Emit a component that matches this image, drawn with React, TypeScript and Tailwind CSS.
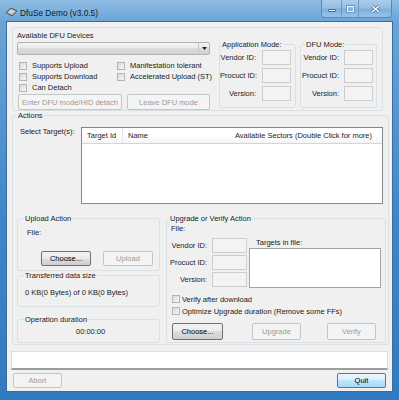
import React from 'react';

type BtnProps = {
  label: string;
  disabled?: boolean;
  primary?: boolean;
  className?: string;
};

const Btn = ({ label, disabled, primary, className = '' }: BtnProps) => {
  const look = disabled
    ? 'border-[#c3c6c9] bg-[#f4f4f4] text-[#9b9b9b]'
    : primary
      ? 'border-[#3c7fb1] bg-[linear-gradient(#eaf6fd,#d9f0fc_50%,#bee6fd_50%,#a7d9f5)] text-black'
      : 'border-[#707070] bg-[linear-gradient(#f2f2f2,#ebebeb_50%,#dddddd_50%,#cfcfcf)] text-black';
  return (
    <div
      className={`flex shrink-0 items-center justify-center rounded-[2px] border ${look} ${className}`}
    >
      {label}
    </div>
  );
};

const Check = ({ label, gap = 'ml-[5px]', className = '' }: { label: string; gap?: string; className?: string }) => (
  <div className={`flex items-center whitespace-nowrap ${className}`}>
    <span className="h-[8px] w-[8px] shrink-0 border border-[#b4b4b4] bg-[linear-gradient(135deg,#d9d9d9,#f7f7f7)]" />
    <span className={gap}>{label}</span>
  </div>
);

type GroupProps = {
  legend: string;
  className?: string;
  legendClass?: string;
  children?: React.ReactNode;
};

const Group = ({ legend, className = '', legendClass = '', children }: GroupProps) => (
  <fieldset className={`shrink-0 rounded-[3px] border border-[#d9e1e6] ${className}`}>
    <legend className={`h-[9px] px-[1px] ${legendClass}`}>{legend}</legend>
    {children}
  </fieldset>
);

const IdRow = ({ label, labelW, gap, boxW, h = 'h-[15px]' }: { label: string; labelW: string; gap: string; boxW: string; h?: string }) => (
  <div className={`flex items-center ${h}`}>
    <span className={`${labelW} shrink-0 whitespace-nowrap text-right`}>{label}</span>
    <span className={`${gap} ${boxW} h-full shrink-0 border border-[#cdcdcd] bg-[#f3f3f3]`} />
  </div>
);

const ModeBox = ({ title, labelW, gap, legendClass }: { title: string; labelW: string; gap: string; legendClass: string }) => (
  <Group legend={title} legendClass={legendClass} className="h-[68px] w-[77px]">
    <div className="mt-[1px] flex flex-col gap-[3px]">
      <IdRow label="Vendor ID:" labelW={labelW} gap={gap} boxW="w-[29px]" />
      <IdRow label="Procuct ID:" labelW={labelW} gap={gap} boxW="w-[29px]" />
      <IdRow label="Version:" labelW={labelW} gap={gap} boxW="w-[29px]" />
    </div>
  </Group>
);

const AppIcon = () => (
  <svg width="13" height="10" viewBox="0 0 13 10">
    <path d="M1 5.5 L6 1 L12 4 L7 9 Z" fill="#a9a9a9" stroke="#4a4a4a" strokeWidth="0.9" />
    <path d="M3 5.4 L6.2 2.6 L10 4.3 L6.9 7.2 Z" fill="#d4d4d4" />
  </svg>
);

const Caption = () => (
  <div className="mr-[7px] ml-auto flex h-[18px] overflow-hidden rounded-b-[4px] border border-t-0 border-[#5b87b0] bg-[linear-gradient(#a9cdec,#94bfe5_45%,#7fb0dd_55%,#96c4ea)]">
    <div className="flex w-[20px] items-center justify-center border-r border-[#6f98be]">
      <span className="mt-[4px] h-[3px] w-[8px] rounded-[1px] border border-[#3f6a92] bg-white" />
    </div>
    <div className="flex w-[17px] items-center justify-center border-r border-[#6f98be]">
      <span className="h-[6px] w-[7px] border border-[#e9f3fb] shadow-[0_0_0_1px_#6d97bf]" />
    </div>
    <div className="flex w-[32px] items-center justify-center">
      <svg width="9" height="8" viewBox="0 0 9 8">
        <path d="M1 1 L8 7 M8 1 L1 7" stroke="#3f6a92" strokeWidth="2.8" />
        <path d="M1 1 L8 7 M8 1 L1 7" stroke="#ffffff" strokeWidth="1.5" />
      </svg>
    </div>
  </div>
);

export default function App() {
  return (
    <div className="h-[400px] w-[399px] overflow-hidden bg-[linear-gradient(180deg,#8fbde4_0px,#6aa4d7_22px,#3f86c8_220px,#2f7bc2_400px)] font-['Liberation_Sans',Arial,sans-serif] text-[7.5px] leading-[9px] text-[#1b1b1b]">
      {/* Title bar */}
      <div className="flex h-[22px] items-start">
        <div className="mt-[7px] ml-[5px]">
          <AppIcon />
        </div>
        <span className="mt-[8px] ml-[2px] text-[8.3px] leading-[10px] text-[#0f1a26]">DfuSe Demo (v3.0.5)</span>
        <Caption />
      </div>

      {/* Client area */}
      <div className="ml-[7px] flex h-[369px] w-[385px] flex-col bg-[#f0f0f0] outline outline-1 outline-[#3d6c9c]">
        {/* Devices */}
        <div className="mt-[5px] ml-[5px] flex h-[84px] w-[371px] rounded-[3px] border border-[#d9e1e6]">
          <div className="ml-[4px] flex w-[193px] flex-col pt-[3px]">
            <span className="h-[9px]">Available DFU Devices</span>
            <div className="mt-[2px] flex h-[13px] items-center rounded-[2px] border border-[#b2b2b2] bg-[linear-gradient(#f4f4f4,#e9e9e9_50%,#dcdcdc_50%,#d2d2d2)]">
              <span className="ml-auto flex h-full w-[11px] items-center justify-center border-l border-[#c8c8c8]">
                <svg width="5" height="3" viewBox="0 0 5 3">
                  <path d="M0 0 H5 L2.5 3 Z" fill="#222" />
                </svg>
              </span>
            </div>
            <div className="mt-[5px] grid grid-cols-[100px_93px] grid-rows-[11px_11px_11px]">
              <Check label="Supports Upload" className="pl-[2px]" />
              <Check label="Manifestation tolerant" />
              <Check label="Supports Download" className="pl-[2px]" />
              <Check label="Accelerated Upload (ST)" />
              <Check label="Can Detach" className="pl-[2px]" />
            </div>
            <div className="mt-[1px] flex h-[16px]">
              <Btn label="Enter DFU mode/HID detach" disabled className="ml-[1px] w-[104px]" />
              <Btn label="Leave DFU mode" disabled className="ml-[5px] w-[83px]" />
            </div>
          </div>
          <div className="mt-[12px] ml-[9px]">
            <ModeBox title="Application Mode:" labelW="w-[36px]" gap="ml-[6px]" legendClass="ml-[1px]" />
          </div>
          <div className="mt-[12px] ml-[4px]">
            <ModeBox title="DFU Mode:" labelW="w-[38px]" gap="ml-[5px]" legendClass="ml-[4px]" />
          </div>
        </div>

        {/* Actions */}
        <Group legend="Actions" legendClass="ml-[4px]" className="ml-[5px] h-[234px] w-[377px]">
          <div className="mt-[7px] flex">
            <span className="w-[68px] shrink-0 pl-[7px]">Select Target(s):</span>
            <div className="h-[77px] w-[302px] shrink-0 border border-[#828790] bg-white">
              <div className="flex h-[16px] items-center border-b border-[#d5d5d5] bg-[linear-gradient(#ffffff,#ffffff_50%,#f3f4f6)]">
                <span className="h-full w-[41px] border-r border-[#e2e5ea] pl-[5px] leading-[16px]">Target Id</span>
                <span className="pl-[5px]">Name</span>
                <span className="mr-[10px] ml-auto">Available Sectors (Double Click for more)</span>
              </div>
            </div>
          </div>

          <div className="mt-[10px] flex">
            {/* Upload side */}
            <div className="ml-[4px] flex w-[143px] flex-col">
              <Group legend="Upload Action" legendClass="ml-[6px]" className="h-[57px] w-[143px]">
                <div className="mt-[5px] pl-[9px]">File:</div>
                <div className="mt-[14px] flex h-[15px]">
                  <Btn label="Choose..." className="ml-[23px] w-[50px]" />
                  <Btn label="Upload" disabled className="ml-[12px] w-[50px]" />
                </div>
              </Group>
              <Group legend="Transferred data size" legendClass="ml-[6px]" className="h-[36px] w-[143px]">
                <div className="mt-[8px] pl-[7px] whitespace-nowrap">0 KB(0 Bytes) of 0 KB(0 Bytes)</div>
              </Group>
              <Group legend="Operation duration" legendClass="ml-[6px]" className="mt-[8px] h-[28px] w-[143px]">
                <div className="mt-[3px] pl-[58px]">00:00:00</div>
              </Group>
            </div>

            {/* Upgrade side */}
            <Group legend="Upgrade or Verify Action" legendClass="ml-[2px]" className="ml-[6px] h-[129px] w-[220px]">
              <div className="mt-[1px] pl-[4px]">File:</div>
              <div className="mt-[5px] flex">
                <div className="flex flex-col gap-[2px]">
                  <IdRow label="Vendor ID:" labelW="w-[40px]" gap="ml-[5px]" boxW="w-[35px]" />
                  <IdRow label="Procuct ID:" labelW="w-[40px]" gap="ml-[5px]" boxW="w-[35px]" />
                  <IdRow label="Version:" labelW="w-[40px]" gap="ml-[5px]" boxW="w-[35px]" />
                </div>
                <div className="ml-[2px] flex flex-col">
                  <span className="h-[9px] pl-[7px]">Targets in file:</span>
                  <div className="mt-[1px] h-[40px] w-[132px] border border-[#a3a3a3] bg-white" />
                </div>
              </div>
              <div className="mt-[5px] flex flex-col pl-[5px]">
                <Check label="Verify after download" gap="ml-[2px]" className="h-[12px]" />
                <Check label="Optimize Upgrade duration (Remove some FFs)" gap="ml-[2px]" className="h-[12px]" />
              </div>
              <div className="mt-[6px] flex h-[17px]">
                <Btn label="Choose..." className="ml-[5px] w-[51px]" />
                <Btn label="Upgrade" disabled className="ml-[29px] w-[49px]" />
                <Btn label="Verify" disabled className="ml-[26px] w-[49px]" />
              </div>
            </Group>
          </div>
        </Group>

        {/* Status */}
        <div className="mt-[6px] ml-[4px] h-[19px] w-[377px] border border-[#dcdcdc] border-b-2 border-b-[#9c9c9c] bg-white" />

        <div className="mt-[3px] flex h-[15px]">
          <Btn label="Abort" disabled className="ml-[6px] w-[49px]" />
          <Btn label="Quit" primary className="mr-[6px] ml-auto w-[49px]" />
        </div>
      </div>
    </div>
  );
}
